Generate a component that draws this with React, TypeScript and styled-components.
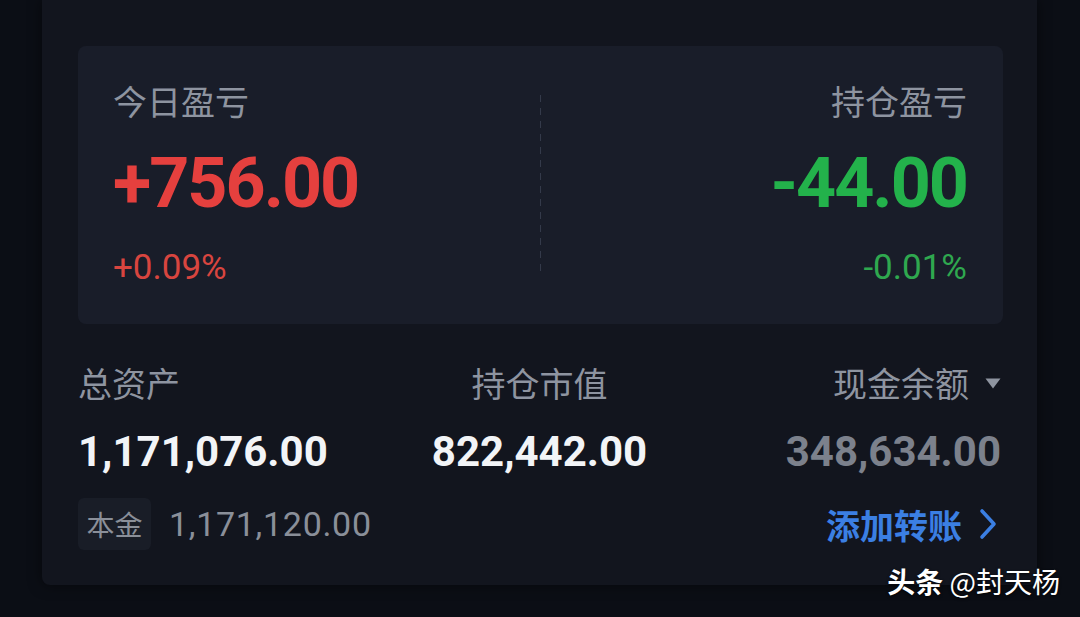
import React from 'react'
import styled, { createGlobalStyle } from 'styled-components'

const GlobalStyle = createGlobalStyle`
  html, body {
    margin: 0;
    padding: 0;
    background: #0b0e15;
  }
  body {
    width: 1080px;
    height: 617px;
    overflow: hidden;
    font-family: 'Noto Sans CJK SC', 'Noto Sans', sans-serif;
  }
`

const numFont = `Roboto, 'Noto Sans', sans-serif`

export default function App() {
  return (
    <Page>
      <GlobalStyle />
      <Card>
        <PnlPanel>
          <PnlColumn $align="left">
            <Label>今日盈亏</Label>
            <BigValue $color="#e5403e">+756.00</BigValue>
            <Percent $color="#d8453f">+0.09%</Percent>
          </PnlColumn>
          <Divider />
          <PnlColumn $align="right">
            <Label>持仓盈亏</Label>
            <BigValue $color="#23b24b">-44.00</BigValue>
            <Percent $color="#2fa84f">-0.01%</Percent>
          </PnlColumn>
        </PnlPanel>

        <AssetRow>
          <AssetCell $align="left">
            <Label>总资产</Label>
            <AssetValue>1,171,076.00</AssetValue>
          </AssetCell>
          <AssetCell $align="center">
            <Label>持仓市值</Label>
            <AssetValue>822,442.00</AssetValue>
          </AssetCell>
          <AssetCell $align="right">
            <Label>
              现金余额
              <Caret viewBox="0 0 16 11">
                <path d="M0.5 0.5h15L8 10.5z" fill="#8e94a0" />
              </Caret>
            </Label>
            <AssetValue $muted>348,634.00</AssetValue>
          </AssetCell>
        </AssetRow>

        <FooterRow>
          <Principal>
            <Badge>本金</Badge>
            <PrincipalValue>1,171,120.00</PrincipalValue>
          </Principal>
          <TransferLink>
            添加转账
            <Chevron viewBox="0 0 20 32">
              <path d="M4 3l12 13L4 29" fill="none" stroke="#3b7fe3" strokeWidth="3.6" strokeLinecap="round" strokeLinejoin="round" />
            </Chevron>
          </TransferLink>
        </FooterRow>
      </Card>
      <Watermark>
        <strong>头条</strong> @封天杨
      </Watermark>
    </Page>
  )
}

const Page = styled.div`
  position: relative;
  width: 1080px;
  height: 617px;
  background: #0b0e15;
`

const Card = styled.div`
  margin-left: 42px;
  width: 995px;
  height: 585px;
  box-sizing: border-box;
  padding: 46px 34px 0 36px;
  background: #12151e;
  border-radius: 0 0 8px 8px;
  box-shadow: 0 0 14px rgba(0, 0, 0, 0.5);
  display: flex;
  flex-direction: column;
`

const PnlPanel = styled.div`
  height: 278px;
  box-sizing: border-box;
  padding: 35px 36px 0 35px;
  background: #191d29;
  border-radius: 8px;
  display: flex;
  align-items: flex-start;
`

const PnlColumn = styled.div<{ $align: 'left' | 'right' }>`
  flex: 1;
  display: flex;
  flex-direction: column;
  align-items: ${(p) => (p.$align === 'left' ? 'flex-start' : 'flex-end')};
`

const Divider = styled.div`
  width: 1px;
  height: 177px;
  margin-top: 14px;
  background: repeating-linear-gradient(to bottom, #343a4a 0 7px, transparent 7px 13px);
`

const Label = styled.div`
  font-size: 34px;
  line-height: 40px;
  color: #8e94a0;
  display: flex;
  align-items: center;
  white-space: nowrap;
`

const BigValue = styled.div<{ $color: string }>`
  margin-top: 22px;
  font-family: ${numFont};
  font-weight: 700;
  font-size: 70px;
  line-height: 80px;
  letter-spacing: -2px;
  color: ${(p) => p.$color};
`

const Percent = styled.div<{ $color: string }>`
  margin-top: 25px;
  font-family: ${numFont};
  font-size: 35px;
  line-height: 40px;
  color: ${(p) => p.$color};
`

const AssetRow = styled.div`
  margin-top: 39px;
  padding-right: 2px;
  display: grid;
  grid-template-columns: 1fr 1fr 1fr;
`

const AssetCell = styled.div<{ $align: 'left' | 'center' | 'right' }>`
  display: flex;
  flex-direction: column;
  align-items: ${(p) => (p.$align === 'left' ? 'flex-start' : p.$align === 'center' ? 'center' : 'flex-end')};
`

const Caret = styled.svg`
  width: 16px;
  height: 11px;
  margin-left: 16px;
`

const AssetValue = styled.div<{ $muted?: boolean }>`
  margin-top: 25px;
  font-family: ${numFont};
  font-weight: 700;
  font-size: 42px;
  line-height: 48px;
  color: ${(p) => (p.$muted ? '#7c818c' : '#f2f4f7')};
`

const FooterRow = styled.div`
  margin-top: 22px;
  padding-right: 5px;
  display: flex;
  align-items: center;
  justify-content: space-between;
`

const Principal = styled.div`
  display: flex;
  align-items: center;
  gap: 18px;
`

const Badge = styled.div`
  width: 73px;
  height: 52px;
  border-radius: 6px;
  background: #191d27;
  color: #8a8f99;
  font-size: 28px;
  display: flex;
  align-items: center;
  justify-content: center;
`

const PrincipalValue = styled.div`
  font-family: ${numFont};
  font-size: 34px;
  font-weight: 400;
  letter-spacing: 0.7px;
  color: #8a8f99;
`

const TransferLink = styled.div`
  display: flex;
  align-items: center;
  gap: 16px;
  font-size: 34px;
  font-weight: 700;
  color: #3b7fe3;
`

const Chevron = styled.svg`
  width: 20px;
  height: 32px;
`

const Watermark = styled.div`
  position: absolute;
  right: 20px;
  bottom: 16px;
  font-size: 28px;
  color: #ffffff;
  text-shadow: 0 1px 3px rgba(0, 0, 0, 0.8);
  strong {
    font-weight: 700;
  }
`
